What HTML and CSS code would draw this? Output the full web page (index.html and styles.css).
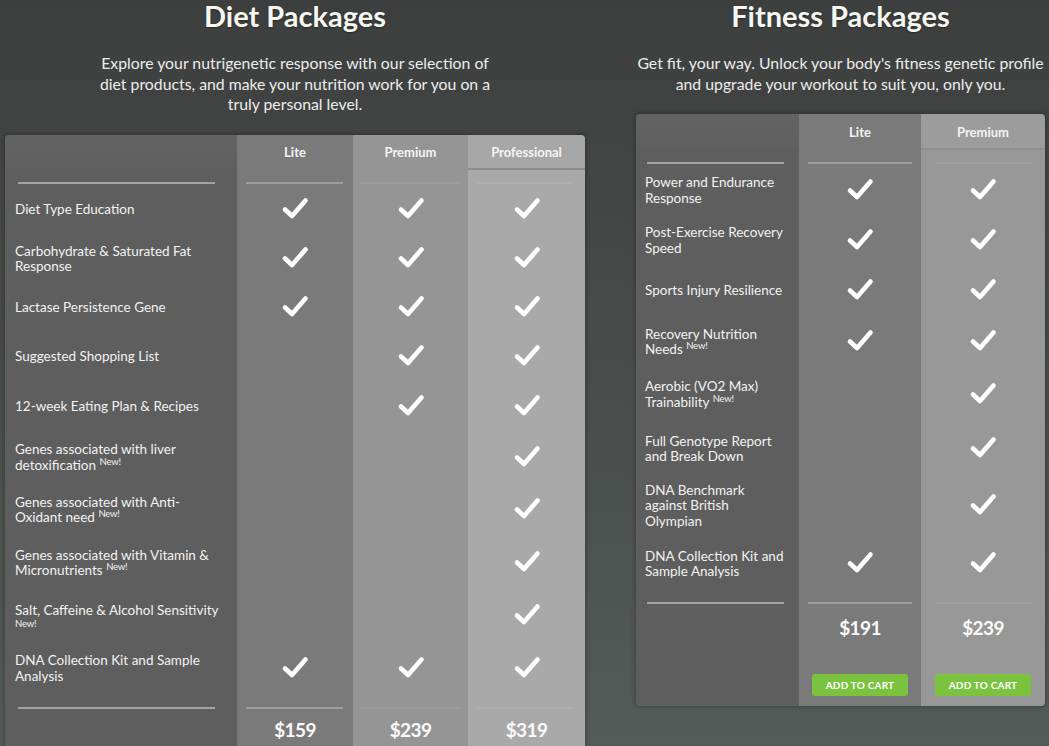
FILE: index.html
```html
<!DOCTYPE html>
<html>
<head>
<meta charset="utf-8">
<link rel="stylesheet" href="styles.css">
</head>
<body>
<svg class="defs" width="0" height="0" aria-hidden="true">
  <symbol id="chk" viewBox="0 0 28 24">
    <path d="M4 13.5 L11 20 L24.5 4.5" fill="none" stroke="#fff" stroke-width="4.6" stroke-linecap="round" stroke-linejoin="round"/>
  </symbol>
</svg>
<div class="page">
  <section class="pkg diet">
    <h2 class="title">Diet Packages</h2>
    <p class="intro">Explore your nutrigenetic response with our selection of<br>diet products, and make your nutrition work for you on a<br>truly personal level.</p>
    <div class="grid diet-grid">
      <div class="cell c0 head"></div><div class="cell c1 head">Lite</div><div class="cell c2 head">Premium</div><div class="cell c3 head last">Professional</div>
      <div class="cell c0 sep top"><i></i></div><div class="cell c1 sep top"><i></i></div><div class="cell c2 sep top"><i></i></div><div class="cell c3 sep top"><i></i></div>

      <div class="cell c0 label"><span class="txt">Diet Type Education</span></div>
      <div class="cell c1 mark"><svg class="check"><use href="#chk"/></svg></div>
      <div class="cell c2 mark"><svg class="check"><use href="#chk"/></svg></div>
      <div class="cell c3 mark"><svg class="check"><use href="#chk"/></svg></div>

      <div class="cell c0 label"><span class="txt">Carbohydrate &amp; Saturated Fat<br>Response</span></div>
      <div class="cell c1 mark"><svg class="check"><use href="#chk"/></svg></div>
      <div class="cell c2 mark"><svg class="check"><use href="#chk"/></svg></div>
      <div class="cell c3 mark"><svg class="check"><use href="#chk"/></svg></div>

      <div class="cell c0 label"><span class="txt">Lactase Persistence Gene</span></div>
      <div class="cell c1 mark"><svg class="check"><use href="#chk"/></svg></div>
      <div class="cell c2 mark"><svg class="check"><use href="#chk"/></svg></div>
      <div class="cell c3 mark"><svg class="check"><use href="#chk"/></svg></div>

      <div class="cell c0 label"><span class="txt">Suggested Shopping List</span></div>
      <div class="cell c1 mark"></div>
      <div class="cell c2 mark"><svg class="check"><use href="#chk"/></svg></div>
      <div class="cell c3 mark"><svg class="check"><use href="#chk"/></svg></div>

      <div class="cell c0 label"><span class="txt">12-week Eating Plan &amp; Recipes</span></div>
      <div class="cell c1 mark"></div>
      <div class="cell c2 mark"><svg class="check"><use href="#chk"/></svg></div>
      <div class="cell c3 mark"><svg class="check"><use href="#chk"/></svg></div>

      <div class="cell c0 label"><span class="txt">Genes associated with liver<br>detoxification <sup class="new">New!</sup></span></div>
      <div class="cell c1 mark"></div>
      <div class="cell c2 mark"></div>
      <div class="cell c3 mark"><svg class="check"><use href="#chk"/></svg></div>

      <div class="cell c0 label"><span class="txt">Genes associated with Anti-<br>Oxidant need <sup class="new">New!</sup></span></div>
      <div class="cell c1 mark"></div>
      <div class="cell c2 mark"></div>
      <div class="cell c3 mark"><svg class="check"><use href="#chk"/></svg></div>

      <div class="cell c0 label"><span class="txt">Genes associated with Vitamin &amp;<br>Micronutrients <sup class="new">New!</sup></span></div>
      <div class="cell c1 mark"></div>
      <div class="cell c2 mark"></div>
      <div class="cell c3 mark"><svg class="check"><use href="#chk"/></svg></div>

      <div class="cell c0 label"><span class="txt">Salt, Caffeine &amp; Alcohol Sensitivity<span class="new-line">New!</span></span></div>
      <div class="cell c1 mark"></div>
      <div class="cell c2 mark"></div>
      <div class="cell c3 mark"><svg class="check"><use href="#chk"/></svg></div>

      <div class="cell c0 label"><span class="txt">DNA Collection Kit and Sample<br>Analysis</span></div>
      <div class="cell c1 mark"><svg class="check"><use href="#chk"/></svg></div>
      <div class="cell c2 mark"><svg class="check"><use href="#chk"/></svg></div>
      <div class="cell c3 mark"><svg class="check"><use href="#chk"/></svg></div>

      <div class="cell c0 sep bottom"><i></i></div><div class="cell c1 sep bottom"><i></i></div><div class="cell c2 sep bottom"><i></i></div><div class="cell c3 sep bottom"><i></i></div>
      <div class="cell c0 price"></div><div class="cell c1 price">$159</div><div class="cell c2 price">$239</div><div class="cell c3 price">$319</div>
      <div class="cell c0 tail"></div><div class="cell c1 tail"></div><div class="cell c2 tail"></div><div class="cell c3 tail"></div>
    </div>
  </section>

  <section class="pkg fitness">
    <h2 class="title">Fitness Packages</h2>
    <p class="intro">Get fit, your way. Unlock your body's fitness genetic profile<br>and upgrade your workout to suit you, only you.</p>
    <div class="grid fit-grid">
      <div class="cell c0 head"></div><div class="cell c1 head">Lite</div><div class="cell c2 head last">Premium</div>
      <div class="cell c0 sep top"><i></i></div><div class="cell c1 sep top"><i></i></div><div class="cell c2 sep top"><i></i></div>

      <div class="cell c0 label"><span class="txt">Power and Endurance<br>Response</span></div>
      <div class="cell c1 mark"><svg class="check"><use href="#chk"/></svg></div>
      <div class="cell c2 mark"><svg class="check"><use href="#chk"/></svg></div>

      <div class="cell c0 label"><span class="txt">Post-Exercise Recovery<br>Speed</span></div>
      <div class="cell c1 mark"><svg class="check"><use href="#chk"/></svg></div>
      <div class="cell c2 mark"><svg class="check"><use href="#chk"/></svg></div>

      <div class="cell c0 label"><span class="txt">Sports Injury Resilience</span></div>
      <div class="cell c1 mark"><svg class="check"><use href="#chk"/></svg></div>
      <div class="cell c2 mark"><svg class="check"><use href="#chk"/></svg></div>

      <div class="cell c0 label"><span class="txt">Recovery Nutrition<br>Needs <sup class="new">New!</sup></span></div>
      <div class="cell c1 mark"><svg class="check"><use href="#chk"/></svg></div>
      <div class="cell c2 mark"><svg class="check"><use href="#chk"/></svg></div>

      <div class="cell c0 label"><span class="txt">Aerobic (VO2 Max)<br>Trainability <sup class="new">New!</sup></span></div>
      <div class="cell c1 mark"></div>
      <div class="cell c2 mark"><svg class="check"><use href="#chk"/></svg></div>

      <div class="cell c0 label"><span class="txt">Full Genotype Report<br>and Break Down</span></div>
      <div class="cell c1 mark"></div>
      <div class="cell c2 mark"><svg class="check"><use href="#chk"/></svg></div>

      <div class="cell c0 label"><span class="txt">DNA Benchmark<br>against British<br>Olympian</span></div>
      <div class="cell c1 mark"></div>
      <div class="cell c2 mark"><svg class="check"><use href="#chk"/></svg></div>

      <div class="cell c0 label"><span class="txt">DNA Collection Kit and<br>Sample Analysis</span></div>
      <div class="cell c1 mark"><svg class="check"><use href="#chk"/></svg></div>
      <div class="cell c2 mark"><svg class="check"><use href="#chk"/></svg></div>

      <div class="cell c0 sep bottom"><i></i></div><div class="cell c1 sep bottom"><i></i></div><div class="cell c2 sep bottom"><i></i></div>
      <div class="cell c0 price"></div><div class="cell c1 price">$191</div><div class="cell c2 price">$239</div>
      <div class="cell c0 buy"></div>
      <div class="cell c1 buy"><a class="btn">Add to cart</a></div>
      <div class="cell c2 buy"><a class="btn">Add to cart</a></div>
    </div>
  </section>
</div>
</body>
</html>
```

FILE: styles.css
```css
html {
  background: linear-gradient(to bottom, #3c3f3d 0px, #464a48 300px, #545b58 746px);
  background-color: #545b58;
  min-height: 746px;
}
body {
  margin: 0;
  font-family: Lato, "Open Sans", sans-serif;
  color: #f2f2f2;
}
.defs { position: absolute; }
.page {
  display: flex;
  gap: 51px;
  padding: 0 4px 0 5px;
  align-items: flex-start;
}
.pkg { display: flex; flex-direction: column; align-items: stretch; }
.diet { width: 580px; }
.fitness { width: 409px; }

.title {
  margin: 0;
  font-size: 29px;
  font-weight: 700;
  line-height: 32px;
  text-align: center;
  color: #f7f7f2;
  text-shadow: 0 1px 2px rgba(0,0,0,0.35);
}
.intro {
  margin: 21px 0 20px;
  font-size: 15.8px;
  line-height: 20.5px;
  text-align: center;
  color: #ededed;
  white-space: nowrap;
}

.grid {
  display: grid;
  border-radius: 4px;
  overflow: hidden;
  box-shadow: 0 0 5px rgba(0,0,0,0.35);
}
.diet-grid {
  grid-template-columns: 232px 116px 115px 117px;
  grid-template-rows: 35px 16px 49px 49px 49px 49px 50px 52px 53px 53px 52px 54px 17px 34px 20px;
}
.fit-grid {
  grid-template-columns: 163px 122px 124px;
  grid-template-rows: 36px 16px 49px 51px 50px 52px 53px 56px 58px 58px 17px 35px 61px;
}

.c0 { background: #5e5e5e; }
.c1 { background: #7a7a7a; }
.c2 { background: #959595; }
.c3 { background: #a9a9a9; }
.fit-grid .c2 { background: #989898; }
.c0.head { background: linear-gradient(#636363, #5f5f5f); }

.cell { min-width: 0; }
.head {
  display: flex;
  align-items: center;
  justify-content: center;
  font-size: 13px;
  font-weight: 700;
  color: #f4f4f4;
}
.head.last { border-bottom: 2px solid #8e8e8e; padding-top: 2px; }
.diet-grid .c3.head { background: #a7a7a7; }
.fit-grid .c2.head { background: #9c9c9c; }

.sep i {
  display: block;
  height: 2px;
}
.sep.top { padding-top: 12px; }
.diet-grid .sep.bottom { padding-top: 11px; }
.fit-grid .sep.bottom { padding-top: 9px; }
.c0.sep i { background: #a3a3a3; margin: 0 22px 0 13px; }
.c1.sep i { background: #9e9e9e; margin: 0 10px 0 9px; }
.c2.sep i { background: #9c9c9c; margin: 0 8px 0 7px; }
.c3.sep i { background: #afafaf; margin: 0 12px 0 9px; }
.fit-grid .c0.sep i { margin: 0 15px 0 11px; }
.fit-grid .c1.sep i { margin: 0 9px 0 9px; }
.fit-grid .c2.sep i { background: #9f9f9f; margin: 0 13px 0 14px; }

.label {
  display: flex;
  align-items: center;
  justify-content: flex-start;
  padding-left: 10px;
  font-size: 13.5px;
  line-height: 15.5px;
  white-space: nowrap;
  color: #f2f2f2;
}
.fit-grid .label { padding-left: 9px; }
.txt { display: block; }
.new {
  font-size: 9.5px;
  line-height: 0;
  vertical-align: 5px;
  letter-spacing: -0.2px;
}
.new-line {
  display: block;
  font-size: 9.5px;
  line-height: 9px;
  letter-spacing: -0.2px;
}

.mark {
  display: flex;
  align-items: center;
  justify-content: center;
  padding-bottom: 4px;
}
.check { width: 28px; height: 24px; display: block; }

.price {
  display: flex;
  align-items: center;
  justify-content: center;
  font-size: 19px;
  font-weight: 700;
  letter-spacing: -0.6px;
  color: #fafafa;
}
.buy {
  display: flex;
  justify-content: center;
  align-items: flex-start;
  padding-top: 29px;
}
.btn {
  display: block;
  width: 96px;
  height: 22px;
  line-height: 22px;
  border-radius: 3px;
  background: #7bc23f;
  color: #fff;
  font-size: 10px;
  font-weight: 700;
  text-align: center;
  text-transform: uppercase;
  letter-spacing: 0.2px;
}
```
